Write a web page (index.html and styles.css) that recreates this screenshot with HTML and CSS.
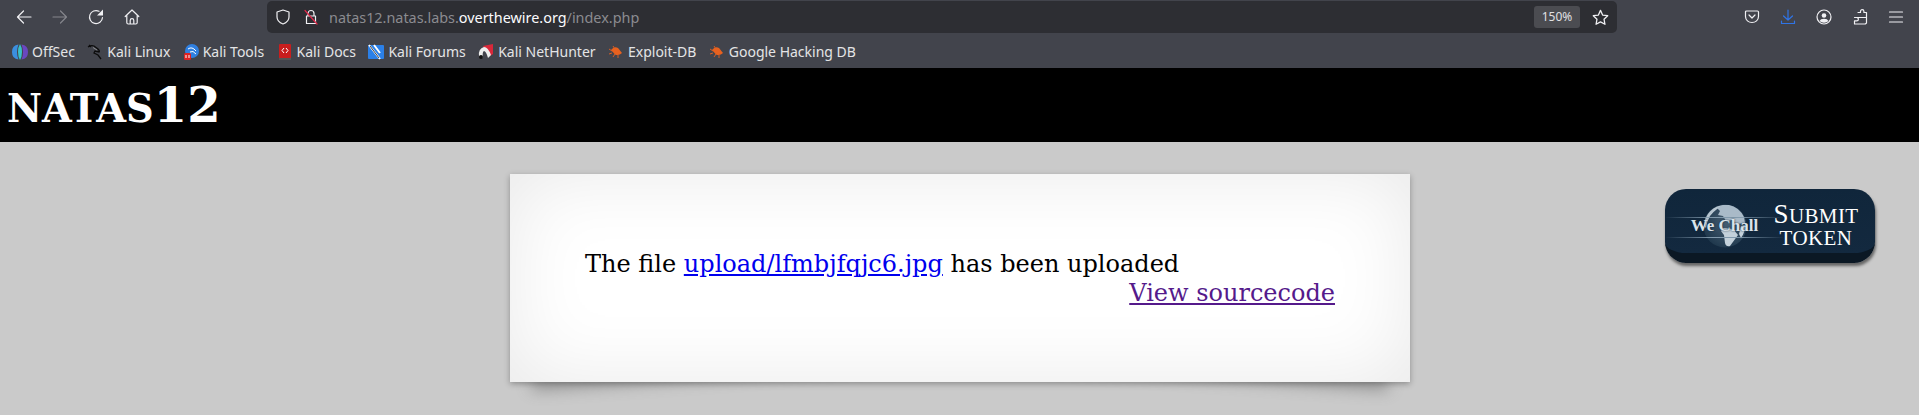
FILE: index.html
```html
<!DOCTYPE html>
<html lang="en">
<head>
<meta charset="utf-8">
<title>natas12</title>
<link rel="stylesheet" href="styles.css">
</head>
<body>
<div class="chrome">
  <div class="navrow">
    <div class="navbtns">
      <svg class="ico" viewBox="0 0 16 16"><path d="M15 8H1.500M7.500 2 1.500 8l6 6" /></svg>
      <svg class="ico dim" viewBox="0 0 16 16"><path d="M1 8h13.500M8.500 2l6 6-6 6" /></svg>
      <svg class="ico" viewBox="0 0 16 16"><path d="M14.500 8.500A6.500 6.500 0 1 1 11 2.300" /><path class="solid" d="M15 0.500v6h-6z" /></svg>
      <svg class="ico" viewBox="0 0 16 16"><path d="M1.200 7.500 8 1l6.800 6.500M2.800 6.500v7q0 1.500 1.500 1.500h7.400q1.500 0 1.500-1.500v-7M6.200 15v-3.500q0-1.800 1.800-1.800t1.800 1.800V15" /></svg>
    </div>
    <div class="urlbar">
      <svg class="ico shield" viewBox="0 0 16 16"><path d="M8 1 2 3v5c0 3.500 2.800 5.800 6 7 3.200-1.200 6-3.500 6-7V3z" /></svg>
      <svg class="ico lock" viewBox="0 0 16 16"><path d="M5 7V4.500a3 3 0 0 1 6 0V7M3.500 7h9v7.500h-9z" /><path class="slash" d="M2 1.500 14 15" /></svg>
      <span class="url"><span class="urldim">natas12.natas.labs.</span>overthewire.org<span class="urldim">/index.php</span></span>
      <span class="zoompill">150%</span>
      <svg class="ico star" viewBox="0 0 16 16"><path d="m8 1.300 2 4.400 4.800.6-3.500 3.300.9 4.800L8 12.100l-4.200 2.300.9-4.800L1.200 6.300 6 5.700z" /></svg>
    </div>
    <div class="tools">
      <svg class="ico" viewBox="0 0 16 16"><path d="M2.500 2h11q1 0 1 1v4.500c0 3.600-3 6-6.500 6s-6.500-2.400-6.500-6V3q0-1 1-1zM5 6l3 3 3-3" /></svg>
      <svg class="ico blue" viewBox="0 0 16 16"><path d="M8 1v10M3.500 7 8 11l4.500-4M1.500 12v2.500h13V12" /></svg>
      <svg class="ico" viewBox="0 0 16 16"><circle cx="8" cy="8" r="7" /><circle class="solid" cx="8" cy="6.500" r="2.300" /><path class="solid" d="M3.500 12q1-2.300 4.500-2.300t4.500 2.300q-2 1.800-4.500 1.800t-4.500-1.800z" /></svg>
      <svg class="ico" viewBox="0 0 16 16"><path d="M6 3.500h2.500V2.300a1.700 1.700 0 0 1 3.400 0v1.200h2.600v5H2.500M2.500 8.500h2.200a1.700 1.700 0 0 1 0 3.400H2.500V15h10.800l1.200-1V8.500" /></svg>
      <svg class="ico" viewBox="0 0 16 16"><path d="M1.500 3h13M1.500 8h13M1.500 13h13" /></svg>
    </div>
  </div>
  <div class="bookmarks">
    <span class="bm"><svg class="fav" viewBox="0 0 16 16"><path d="M6.500 0.500Q0 1 0 8t6.500 7.500Q5 12 5 8t1.500-7.500z" fill="#3b8fe0"/><path d="M9.500 0.500Q16 1 16 8t-6.500 7.500Q11 12 11 8t-1.500-7.500z" fill="#6a47c0"/><path d="M8 0q-2 3-2 8t2 8q2-3 2-8t-2-8z" fill="#39c0c8"/></svg>OffSec</span>
    <span class="bm"><svg class="fav" viewBox="0 0 16 16"><path d="M1 3q3-2 6-1l4 3q2 2 1 3L8 7l-1 2 4 2 3 4M2 1l2 2" fill="none" stroke="#0c0c0c" stroke-width="1.300"/><path d="M6 3.500l4 2.500" stroke="#bbb" stroke-width=".6"/></svg>Kali Linux</span>
    <span class="bm"><svg class="fav" viewBox="0 0 16 16"><circle cx="9" cy="7" r="7" fill="#2f7fe0"/><path d="M5 5q4-3 8 2M7 8q3-2 6 2" stroke="#fff" fill="none"/><rect x="1" y="9" width="7" height="7" rx="1.500" fill="#d22"/><path d="M3 11v3M6 11v3" stroke="#fff"/></svg>Kali Tools</span>
    <span class="bm"><svg class="fav" viewBox="0 0 16 16"><rect x="2" y="0" width="12" height="16" rx="1" fill="#c81e1e"/><rect x="2" y="14" width="12" height="2" fill="#555"/><path d="m7 4-2 2.500L7 9M9 4l2 2.500L9 9" stroke="#fff" fill="none"/></svg>Kali Docs</span>
    <span class="bm"><svg class="fav" viewBox="0 0 16 16"><rect y="1" width="16" height="14" rx="1" fill="#2b80e8"/><path d="M1 1l11 14M6 1l6 8" stroke="#fff" stroke-width="2"/><path d="M2 2l9 12" stroke="#111" stroke-width=".8"/></svg>Kali Forums</span>
    <span class="bm"><svg class="fav" viewBox="0 0 16 16"><path d="M5 2 15 0v10l-3 2z" fill="#d9283a"/><path d="M1 12Q0 5 6 3q4 0 7 8l-3 3Q8 7 6 7q-2 1-1 7z" fill="#eee"/><circle cx="3" cy="13" r="2" fill="#111"/></svg>Kali NetHunter</span>
    <span class="bm"><svg class="fav" viewBox="0 0 16 16"><path d="M3 6q3-4 7-2l4 5q-3 3-7 1.500z" fill="#e8611f"/><path d="M1 5l3 2M1 10l3-1M5 13l2-3M10 14l0-3M5 2l2 3" stroke="#e8611f" stroke-width=".9"/></svg>Exploit-DB</span>
    <span class="bm"><svg class="fav" viewBox="0 0 16 16"><path d="M3 6q3-4 7-2l4 5q-3 3-7 1.500z" fill="#e8611f"/><path d="M1 5l3 2M1 10l3-1M5 13l2-3M10 14l0-3M5 2l2 3" stroke="#e8611f" stroke-width=".9"/></svg>Google Hacking DB</span>
  </div>
</div>
<header class="banner">
  <h1 class="title"><span class="caps">natas</span>12</h1>
</header>
<main class="card">
  <p class="msg">The file <a class="link" href="#">upload/lfmbjfqjc6.jpg</a> has been uploaded</p>
  <div class="source"><a class="visited" href="#">View sourcecode</a></div>
</main>
<a class="wechall" href="#">
  <span class="logo">
    <svg class="globe" viewBox="0 0 44 44"><defs><radialGradient id="sea" cx=".6" cy=".4" r=".7"><stop offset="0" stop-color="#4b6276"/><stop offset="1" stop-color="#1b3449"/></radialGradient></defs><circle cx="22" cy="22" r="21.500" fill="url(#sea)"/><path d="M1 22A21 21 0 0 1 22 1q-9 3-15 11-3 5-4 12z" fill="#b8c6d1"/><path d="M20 1h6q10 2 15 12l1 6-8 1-5-4-6 1-3-5-5-1 2-4-3-3z" fill="#a9bac8"/><path d="M20 24l10 1 5 6-8 11q-4 1-5-3l-1-8-3-4zM38 22l4-1q0 8-4 13l-2-4z" fill="#c4d1db"/></svg>
    <span class="streak streak1"></span>
    <span class="streak streak2"></span>
    <span class="wetext">We Chall</span>
  </span>
  <span class="submit"><span class="sline"><span class="sbig">S</span>UBMIT</span><span class="sline">TOKEN</span></span>
</a>
</body>
</html>
```
FILE: styles.css
```css
html, body {
  margin: 0;
  padding: 0;
}
body {
  background: #cacaca;
  height: 415px;
  overflow: hidden;
  position: relative;
  font-family: "DejaVu Serif", serif;
}
.chrome {
  height: 68px;
  background: #42444c;
  color: #e4e4e6;
  font-family: "Noto Sans", sans-serif;
}
.navrow {
  height: 35px;
  display: flex;
  align-items: flex-start;
}
.ico {
  width: 16px;
  height: 16px;
  fill: none;
  stroke: #f0f0f3;
  stroke-width: 1.2;
  stroke-linecap: round;
  stroke-linejoin: round;
  flex: none;
}
.ico.dim { stroke: #85868c; }
.ico.blue { stroke: #2f74e6; }
.ico .solid { fill: #f0f0f3; stroke: none; }
.ico .slash { stroke: #e0294a; }
.navbtns {
  width: 267px;
  padding: 9px 0 0 16px;
  box-sizing: border-box;
  display: flex;
  gap: 20px;
  flex: none;
}
.urlbar {
  margin-top: 1px;
  width: 1350px;
  height: 32px;
  box-sizing: border-box;
  background: #2d2e33;
  border-radius: 5px;
  display: flex;
  align-items: center;
  padding-left: 8px;
  flex: none;
}
.lock { margin-left: 12px; }
.url {
  margin-left: 10px;
  font-size: 14.4px;
  color: #fbfbfe;
  flex: 1;
}
.urldim { color: #8b8b90; }
.zoompill {
  width: 46px;
  height: 22px;
  background: #4b4c51;
  border-radius: 3px;
  font-size: 12px;
  line-height: 22px;
  text-align: center;
  color: #e0e0e4;
}
.star {
  margin: 0 8px 0 12px;
  width: 17px;
  height: 17px;
}
.tools {
  flex: 1;
  padding: 9px 0 0 127px;
  display: flex;
  gap: 20px;
}
.bookmarks {
  height: 33px;
  display: flex;
  align-items: center;
  padding-left: 12px;
  gap: 12.4px;
  font-size: 14px;
  box-sizing: border-box;
}
.bm {
  display: flex;
  align-items: center;
  gap: 4px;
  white-space: nowrap;
}
.fav {
  width: 16px;
  height: 16px;
  flex: none;
}
.banner {
  height: 74px;
  background: #000;
  color: #fff;
  display: flex;
  align-items: center;
  padding-left: 7px;
}
.title {
  margin: 0;
  font-size: 48px;
  line-height: 1;
  font-weight: bold;
}
.caps {
  font-size: 38.4px;
  text-transform: uppercase;
}
.card {
  display: block;
  position: relative;
  width: 900px;
  height: 208px;
  box-sizing: border-box;
  margin: 32px auto 0;
  padding: 76px 74.5px 74px 75.5px;
  background: #fff;
  font-size: 24px;
  line-height: 29px;
  box-shadow: 0 1.5px 6px rgba(0, 0, 0, .3), inset 0 0 80px rgba(0, 0, 0, .09);
}
.card::before,
.card::after {
  content: "";
  position: absolute;
  z-index: -1;
  bottom: 30px;
  left: 20px;
  top: 80%;
  width: 50%;
  max-width: 450px;
  background: #909090;
  box-shadow: 0 22px 16px #8c8c8c;
  transform: rotate(-4deg);
}
.card::after {
  left: auto;
  right: 20px;
  transform: rotate(4deg);
}
.msg {
  margin: 0;
  color: #000;
}
.link { color: #0000ee; }
.source {
  text-align: right;
}
.visited { color: #551a8b; }
.wechall {
  position: absolute;
  left: 1665px;
  top: 189px;
  width: 210px;
  height: 64px;
  border-radius: 21px;
  background: linear-gradient(#10263b, #13293f);
  border-bottom: 10px solid #0b1824;
  box-shadow: 1px 3px 3px rgba(0, 0, 0, .5);
  display: flex;
  align-items: center;
  color: #fff;
  text-decoration: none;
  overflow: hidden;
}
.logo {
  position: relative;
  width: 119px;
  height: 64px;
  flex: none;
  display: flex;
  align-items: center;
  justify-content: center;
}
.globe {
  width: 44px;
  height: 44px;
  margin-top: 9px;
}
.streak {
  position: absolute;
  left: 0;
  right: 0;
  height: 1px;
  background: linear-gradient(90deg, transparent, #8199ac 40%, #8199ac 60%, transparent);
}
.streak1 { top: 28px; }
.streak2 { top: 48px; }
.wetext {
  position: absolute;
  left: 0;
  right: 0;
  top: 28px;
  text-align: center;
  font-family: "Liberation Serif", serif;
  font-size: 17px;
  line-height: 18px;
  font-weight: bold;
  color: #dbe3e9;
  text-shadow: 0 0 2px #10263b;
}
.submit {
  display: flex;
  flex-direction: column;
  align-items: center;
  flex: none;
  width: 90px;
  margin-left: -13px;
  padding-top: 10px;
  font-family: "Liberation Serif", serif;
  font-size: 21px;
  line-height: 22px;
}
.sline { white-space: nowrap; letter-spacing: .4px; }
.sbig { font-size: 27px; }
```
